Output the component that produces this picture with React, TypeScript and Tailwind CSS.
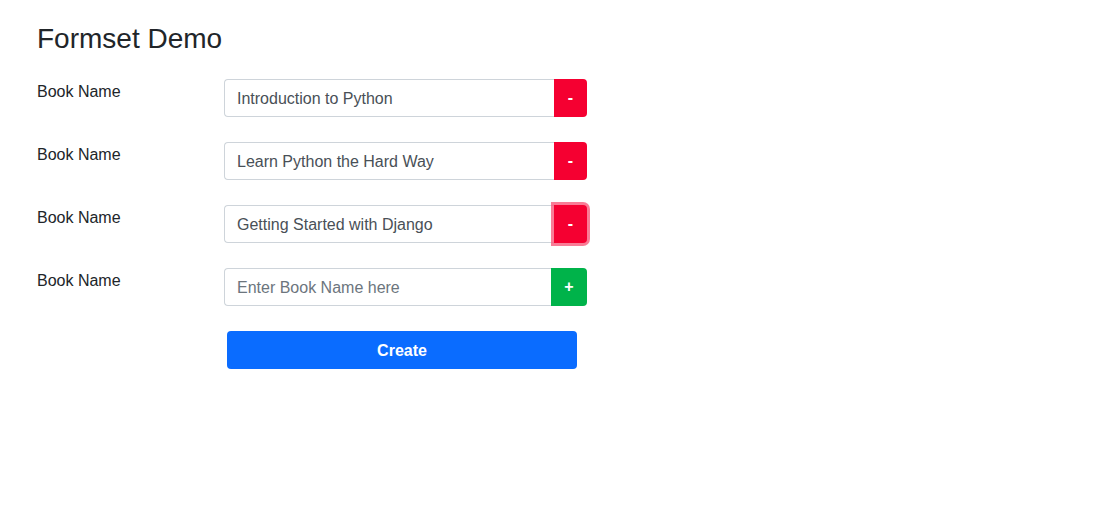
import React from "react";

const rows = [
  { value: "Introduction to Python", kind: "minus" as const },
  { value: "Learn Python the Hard Way", kind: "minus" as const },
  { value: "Getting Started with Django", kind: "focus" as const },
  { value: "", kind: "plus" as const },
];

export default function App() {
  return (
    <div className="min-h-[521px] bg-white pl-[37px] pt-[22px] text-[#212529]" style={{ fontFamily: '"Liberation Sans", Arial, sans-serif' }}>
      <h3 className="text-[28px] leading-[34px] font-medium text-[#212529] mb-[23px]">Formset Demo</h3>
      <div className="flex flex-col gap-[25px]">
        {rows.map((r, i) => (
          <div key={i} className="flex items-start">
            <label className="w-[187px] pt-[1px] text-[16px] leading-[24px]">Book Name</label>
            <div className="flex w-[363px] h-[38px]">
              <input
                readOnly
                value={r.value}
                placeholder="Enter Book Name here"
                className="flex-1 min-w-0 h-[38px] border border-r-0 border-[#ced4da] rounded-l-[4px] px-[12px] pt-[2px] text-[16px] text-[#495057] placeholder:text-[#6c757d] outline-none"
              />
              {r.kind === "plus" ? (
                <button className="w-[36px] h-[38px] bg-[#00b34a] text-white text-[16px] font-bold rounded-r-[4px] flex items-center justify-center">+</button>
              ) : (
                <button
                  className={`w-[33px] h-[38px] bg-[#f50031] text-white text-[16px] font-bold rounded-r-[4px] flex items-center justify-center ${r.kind === "focus" ? "shadow-[0_0_0_3px_rgba(247,80,115,0.75)]" : ""}`}
                >
                  -
                </button>
              )}
            </div>
          </div>
        ))}
      </div>
      <div className="pl-[190px] pt-[25px]">
        <button className="w-[350px] h-[38px] pt-[1px] bg-[#0a6cff] text-white text-[16px] font-bold rounded-[4px]">Create</button>
      </div>
    </div>
  );
}
